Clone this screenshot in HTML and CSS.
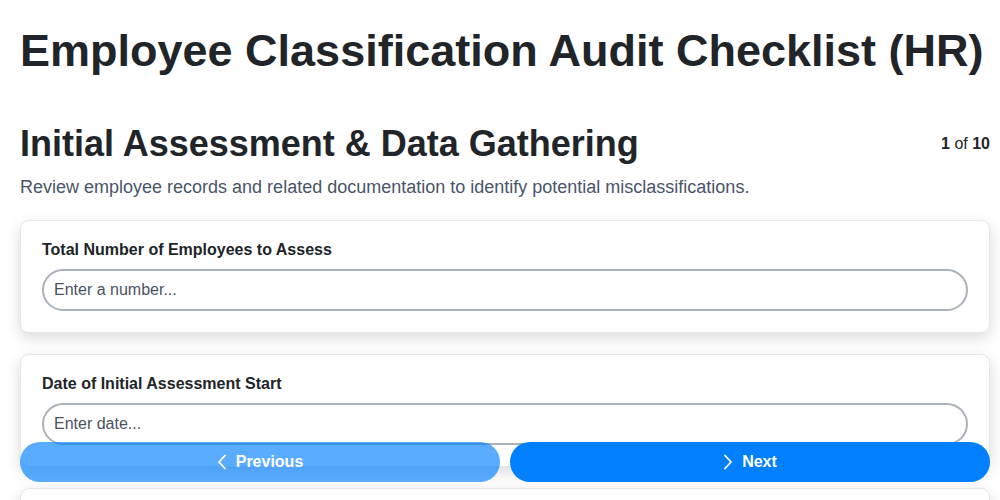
FILE: index.html
```html
<!DOCTYPE html>
<html lang="en">
<head>
<meta charset="utf-8">
<title>Employee Classification Audit Checklist (HR)</title>
<link rel="stylesheet" href="styles.css">
</head>
<body>
<main class="page">
  <h1 class="title">Employee Classification Audit Checklist (HR)</h1>
  <section class="step">
    <div class="step-head">
      <h2 class="step-title">Initial Assessment &amp; Data Gathering</h2>
      <div class="step-count"><b>1</b> of <b>10</b></div>
    </div>
    <p class="step-desc">Review employee records and related documentation to identify potential misclassifications.</p>
    <div class="cards">
      <div class="card">
        <label class="field-label" for="f1">Total Number of Employees to Assess</label>
        <input class="field-input" id="f1" type="text" placeholder="Enter a number...">
      </div>
      <div class="card">
        <label class="field-label" for="f2">Date of Initial Assessment Start</label>
        <input class="field-input" id="f2" type="text" placeholder="Enter date...">
      </div>
      <div class="card">
        <label class="field-label" for="f3">Departments Included in Audit</label>
        <input class="field-input" id="f3" type="text" placeholder="Enter departments...">
      </div>
    </div>
  </section>
</main>
<nav class="nav">
  <button class="btn btn-prev" type="button">
    <svg class="chev" viewBox="0 0 10 16" width="10" height="16"><path d="M8 1.5 L2 8 L8 14.5" fill="none" stroke="currentColor" stroke-width="1.8" stroke-linecap="round" stroke-linejoin="round"/></svg>
    <span>Previous</span>
  </button>
  <button class="btn btn-next" type="button">
    <svg class="chev" viewBox="0 0 10 16" width="10" height="16"><path d="M2 1.5 L8 8 L2 14.5" fill="none" stroke="currentColor" stroke-width="1.8" stroke-linecap="round" stroke-linejoin="round"/></svg>
    <span>Next</span>
  </button>
</nav>
</body>
</html>
```

FILE: styles.css
```css
* { box-sizing: border-box; }

html, body {
  margin: 0;
  padding: 0;
  background: #ffffff;
  font-family: "Liberation Sans", Arial, sans-serif;
  color: #212529;
}

.page {
  padding: 0 10px 100px 20px;
}

.title {
  margin: 0;
  padding-top: 25px;
  font-size: 45px;
  line-height: 52px;
  font-weight: 700;
  color: #212529;
}

.step {
  margin-top: 46px;
}

.step-head {
  display: flex;
  justify-content: space-between;
  align-items: flex-start;
}

.step-title {
  margin: 0;
  font-size: 36px;
  line-height: 42px;
  font-weight: 700;
  color: #212529;
}

.step-count {
  font-size: 16px;
  line-height: 18px;
  margin-top: 12px;
  color: #212529;
}

.step-count b { font-weight: 700; }

.step-desc {
  margin: 10px 0 0;
  font-size: 18px;
  line-height: 24px;
  color: #4a5568;
}

.cards {
  margin-top: 21px;
  display: flex;
  flex-direction: column;
  gap: 21px;
}

.card {
  background: #ffffff;
  border: 1px solid #e6e7ea;
  border-radius: 9px;
  padding: 20px 21px 21px;
  box-shadow: 0 5px 15px rgba(0, 0, 0, 0.15);
  display: flex;
  flex-direction: column;
}

.field-label {
  font-size: 16px;
  line-height: 18px;
  font-weight: 700;
  color: #212529;
  margin-bottom: 10px;
}

.field-input {
  height: 42px;
  border: 2px solid #aab1ba;
  border-radius: 21px;
  padding: 0 10px;
  font-family: "Liberation Sans", Arial, sans-serif;
  font-size: 16px;
  color: #212529;
  background: #ffffff;
  outline: none;
}

.field-input::placeholder {
  color: #4b5262;
  opacity: 1;
}

.nav {
  position: fixed;
  left: 20px;
  right: 10px;
  bottom: 18px;
  display: flex;
  gap: 10px;
}

.btn {
  flex: 1;
  height: 40px;
  border: none;
  border-radius: 20px;
  background: #0080ff;
  color: #ffffff;
  font-family: "Liberation Sans", Arial, sans-serif;
  font-size: 16px;
  font-weight: 700;
  display: flex;
  align-items: center;
  justify-content: center;
  gap: 9px;
  padding: 0;
}

.btn-prev {
  opacity: 0.65;
}

.chev {
  display: block;
}
```
